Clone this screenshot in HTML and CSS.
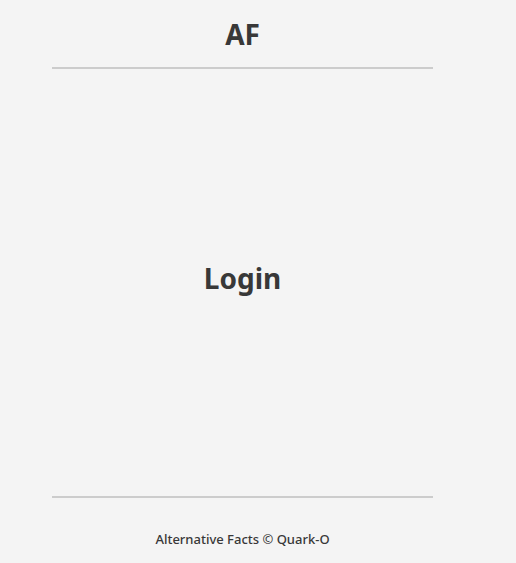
FILE: index.html
```html
<!DOCTYPE html>
<html>
<head>
<meta charset="utf-8">
<link rel="stylesheet" href="styles.css">
</head>
<body>
<div class="page">
  <header class="header"><h1 class="brand">AF</h1></header>
  <main class="main"><h2 class="title">Login</h2></main>
  <footer class="footer"><p class="copy">Alternative Facts © Quark-O</p></footer>
</div>
</body>
</html>
```

FILE: styles.css
```css
html, body {
  margin: 0;
  padding: 0;
  background: #f4f4f4;
  color: #383838;
  font-family: "Noto Sans", "Open Sans", sans-serif;
}
.page {
  width: 381px;
  margin-left: 52px;
  height: 563px;
  display: flex;
  flex-direction: column;
}
.header {
  height: 67px;
  border-bottom: 2px solid #cccccc;
  display: flex;
  justify-content: center;
}
.brand {
  margin: 15px 0 0;
  font-size: 28px;
  line-height: 38px;
  font-weight: 700;
}
.main {
  flex: 1;
  display: flex;
  justify-content: center;
  align-items: center;
  border-bottom: 2px solid #cccccc;
}
.title {
  margin: 0 0 10px;
  font-size: 28px;
  font-weight: 700;
  line-height: 40px;
}
.footer {
  height: 65px;
  display: flex;
  justify-content: center;
}
.copy {
  margin: 31px 0 0;
  font-size: 13px;
  line-height: 20px;
  font-weight: 500;
}
```
